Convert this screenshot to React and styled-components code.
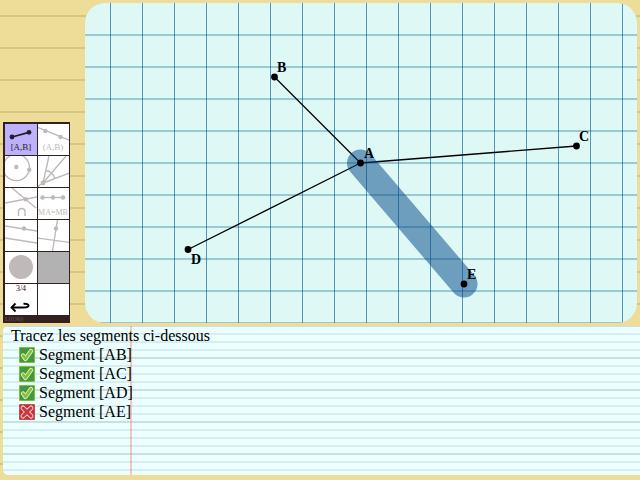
import React from 'react';
import styled, { createGlobalStyle } from 'styled-components';

const GlobalStyle = createGlobalStyle`
  * { box-sizing: border-box; }
  body {
    margin: 0;
    background: linear-gradient(#d8c583 2px, transparent 2px) 0 15px / 100% 32px #eedd99;
    color: #000;
    font: 16px/19px "Liberation Serif", "Times New Roman", serif;
  }
`;

const Page = styled.div`
  display: grid;
  grid-template-columns: 67px minmax(0, 1fr);
  grid-template-rows: minmax(320px, 1fr) auto;
  column-gap: 15px;
  row-gap: 3px;
  min-height: 100vh;
  padding: 3px 0 5px 3px;
`;

const Toolbar = styled.nav`
  align-self: end;
  display: grid;
  grid-template-columns: 32px 31px;
  grid-template-rows: repeat(6, 31px) 7px;
  gap: 1px;
  padding: 2px 1px 0 2px;
  background: #35201f;
`;

const Tool = styled.button`
  display: block;
  padding: 0;
  border: 0;
  overflow: hidden;
  background: ${(p) => p.$fill || '#fff'};
  color: ${(p) => (p.$active ? '#281c28' : '#bfb9b9')};
  cursor: pointer;

  svg { display: block; }
`;

const ToolbarFooter = styled.div`
  grid-column: 1 / -1;
  overflow: hidden;
  color: #6b5a59;
  font-size: 6px;
  line-height: 7px;
`;

const ArtGroup = styled.g`
  text {
    font-family: "Liberation Serif", serif;
    text-anchor: middle;
    stroke: none;
  }
  text:not([fill]) { fill: currentColor; }
  circle:not([fill]) { fill: currentColor; stroke: none; }
`;

const Board = styled.main`
  margin-right: 3px;
  border-radius: 20px;
  overflow: hidden;
  background:
    linear-gradient(90deg, rgba(0, 91, 141, 0.62) 1px, transparent 1px) 25px 0 / 32px 100%,
    linear-gradient(#ddf8f5, #ddf8f5) 0 0 / 100% 1px no-repeat,
    linear-gradient(#99c9d4 2px, transparent 2px) 0 31px / 100% 32px,
    #ddf8f5;
`;

const Figure = styled.svg`
  display: block;
  width: 100%;
  height: 100%;

  text { font: bold 14px "Liberation Serif", serif; }
`;

const Notebook = styled.section`
  grid-column: 1 / -1;
  min-height: 149px;
  padding: 0 8px;
  border-radius: 5px 0 0 5px;
  background:
    linear-gradient(90deg, rgba(255, 110, 110, 0.4) 2px, transparent 2px) 127px 0 / 100% 100% no-repeat,
    linear-gradient(#cbdfe0 2px, transparent 2px) 0 -1px / 100% 32px,
    linear-gradient(#d8edf1 2px, transparent 2px) 0 -1px / 100% 8px,
    #ecffff;
`;

const Instruction = styled.p`
  margin: 0;
`;

const Steps = styled.ul`
  margin: 0;
  padding: 0 0 0 8px;
  list-style: none;
`;

const Step = styled.li`
  display: flex;
  align-items: center;
  gap: 4px;
  height: 19px;

  svg { flex: none; }
`;

const tools = [
  {
    label: 'Segment', active: true, fill: '#bcb1fa',
    art: (
      <>
        <path d="M7 13 24 8.3" strokeWidth="1.8" />
        <circle cx="7" cy="13" r="2.4" /><circle cx="24" cy="8.3" r="2.4" />
        <text x="16" y="26" fontSize="9">[A,B]</text>
      </>
    ),
  },
  {
    label: 'Droite',
    art: (
      <>
        <path d="M-1 3 32 16.5" />
        <circle cx="7.3" cy="7" r="2.2" /><circle cx="22.5" cy="13" r="2.2" />
        <text x="15" y="26" fontSize="9">(A,B)</text>
      </>
    ),
  },
  {
    label: 'Cercle',
    art: (
      <>
        <circle cx="11.3" cy="11.5" r="13.2" fill="none" />
        <circle cx="11.3" cy="11" r="2.2" /><circle cx="24.3" cy="13.7" r="2.2" />
      </>
    ),
  },
  {
    label: 'Bissectrice',
    art: (
      <>
        <path d="M5 27 11 0M5 27 28 0M5 27 32 17M-1 31 5 27M8 14.5Q14 15 17 22.5" />
        <circle cx="5" cy="27" r="2.4" />
      </>
    ),
  },
  {
    label: 'Intersection',
    art: (
      <>
        <path d="M7 0 31 20M0 15 32 9" />
        <circle cx="20.7" cy="11.3" r="2.2" />
        <path d="M13.5 28V23.5Q13.5 20.5 16.7 20.5T20 23.5V28" />
      </>
    ),
  },
  {
    label: 'Milieu',
    art: (
      <>
        <path d="M4.5 9.5H25" />
        <circle cx="4.5" cy="9.5" r="2.2" /><circle cx="15" cy="9.5" r="2.2" /><circle cx="25" cy="9.5" r="2.2" />
        <text x="15" y="27" fontSize="8">MA=MB</text>
      </>
    ),
  },
  {
    label: 'Parallèle',
    art: (
      <>
        <path d="M0 6 32 11M0 18 32 23" />
        <circle cx="19" cy="8.5" r="2.2" />
      </>
    ),
  },
  {
    label: 'Perpendiculaire',
    art: (
      <>
        <path d="M19.5 0 14.5 31M-1 18 32 22.5" />
        <circle cx="18" cy="8.5" r="2.2" />
      </>
    ),
  },
  { label: 'Gomme', art: <circle cx="16" cy="15" r="12" /> },
  { label: 'Couleur', fill: '#b2b2b2' },
  {
    label: 'Annuler',
    art: (
      <>
        <text x="16" y="7" fontSize="8" fill="#2c0d08">3/4</text>
        <path d="M6.5 23.5H18.5Q23.5 23.5 23.5 21.5T18.5 19.8" stroke="#000" strokeWidth="2" />
        <path d="M10.5 19.5 6.5 23.5 10.5 27.5" stroke="#000" strokeWidth="1.8" />
      </>
    ),
  },
  { label: 'Vide' },
];

function ToolArt({ children }) {
  return (
    <svg width="32" height="31" viewBox="0 0 32 31" fill="none" stroke="currentColor" strokeWidth="1.4" aria-hidden="true">
      <ArtGroup>{children}</ArtGroup>
    </svg>
  );
}

const points = [
  { name: 'A', x: 275.5, y: 160, lx: 279, ly: 155 },
  { name: 'B', x: 189.5, y: 74, lx: 192, ly: 69 },
  { name: 'C', x: 491.5, y: 143, lx: 494, ly: 138 },
  { name: 'D', x: 103, y: 246.5, lx: 106, ly: 261 },
  { name: 'E', x: 379, y: 281, lx: 382, ly: 276 },
];

const [origin, ...others] = points;

function StateIcon({ done }) {
  return (
    <svg width="16" height="16" viewBox="0 0 16 16" role="img" aria-label={done ? 'Fait' : 'À faire'}>
      <rect width="16" height="16" rx="1" fill={done ? '#83bd37' : '#cf4a4c'} />
      <rect x="1" y="1" width="14" height="14" fill={done ? '#43983f' : '#b92f35'} />
      {done ? (
        <>
          <path d="M4 8.5 6.5 11.8 12 4" fill="none" stroke="#e2f1bd" strokeWidth="4.4" strokeLinecap="round" strokeLinejoin="round" />
          <path d="M4 8.5 6.5 11.8 12 4" fill="none" stroke="#86bf3b" strokeWidth="2.6" strokeLinecap="round" strokeLinejoin="round" />
        </>
      ) : (
        <>
          <path d="M4 4 12 12M12 4 4 12" stroke="#f2cccc" strokeWidth="5" strokeLinecap="round" />
          <path d="M4 4 12 12M12 4 4 12" stroke="#c9363c" strokeWidth="3" strokeLinecap="round" />
        </>
      )}
    </svg>
  );
}

const steps = [
  { name: 'AB', done: true },
  { name: 'AC', done: true },
  { name: 'AD', done: true },
  { name: 'AE', done: false },
];

export default function App() {
  return (
    <>
      <GlobalStyle />
      <Page>
        <Toolbar aria-label="Outils">
          {tools.map((t) => (
            <Tool key={t.label} type="button" aria-label={t.label} $active={t.active} $fill={t.fill}>
              <ToolArt>{t.art}</ToolArt>
            </Tool>
          ))}
          <ToolbarFooter>L(0,90)</ToolbarFooter>
        </Toolbar>
        <Board>
          <Figure>
            {others.map((p) =>
              p.name === 'E' ? (
                <line key={p.name} x1={origin.x} y1={origin.y} x2={p.x} y2={p.y}
                  stroke="#004388" strokeOpacity="0.5" strokeWidth="27" strokeLinecap="round" />
              ) : (
                <line key={p.name} x1={origin.x} y1={origin.y} x2={p.x} y2={p.y} stroke="#000" strokeWidth="1.3" />
              )
            )}
            {points.map((p) => (
              <g key={p.name}>
                <circle cx={p.x} cy={p.y} r="3.4" />
                <text x={p.lx} y={p.ly}>{p.name}</text>
              </g>
            ))}
          </Figure>
        </Board>
        <Notebook>
          <Instruction>Tracez les segments ci-dessous</Instruction>
          <Steps>
            {steps.map((s) => (
              <Step key={s.name}>
                <StateIcon done={s.done} />
                <span>Segment [{s.name}]</span>
              </Step>
            ))}
          </Steps>
        </Notebook>
      </Page>
    </>
  );
}
